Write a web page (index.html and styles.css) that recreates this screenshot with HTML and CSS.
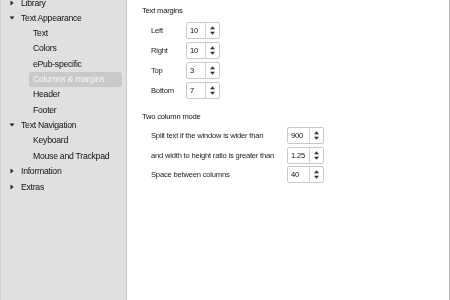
FILE: index.html
```html
<!DOCTYPE html>
<html>
<head>
<meta charset="utf-8">
<link rel="stylesheet" href="styles.css">
</head>
<body>
<div class="window">
  <nav class="sidebar">
    <ul class="tree">
      <li class="item top"><svg class="arr" width="8" height="8" viewBox="0 0 8 8"><path d="M2.5 1.5 L5.5 4 L2.5 6.5 Z"/></svg><span>Library</span></li>
      <li class="item top"><svg class="arr" width="8" height="8" viewBox="0 0 8 8"><path d="M1.5 2.5 L6.5 2.5 L4 5.5 Z"/></svg><span>Text Appearance</span></li>
      <li class="item child"><span>Text</span></li>
      <li class="item child"><span>Colors</span></li>
      <li class="item child"><span>ePub-specific</span></li>
      <li class="item child selected"><span>Columns &amp; margins</span></li>
      <li class="item child"><span>Header</span></li>
      <li class="item child"><span>Footer</span></li>
      <li class="item top"><svg class="arr" width="8" height="8" viewBox="0 0 8 8"><path d="M1.5 2.5 L6.5 2.5 L4 5.5 Z"/></svg><span>Text Navigation</span></li>
      <li class="item child"><span>Keyboard</span></li>
      <li class="item child"><span>Mouse and Trackpad</span></li>
      <li class="item top"><svg class="arr" width="8" height="8" viewBox="0 0 8 8"><path d="M2.5 1.5 L5.5 4 L2.5 6.5 Z"/></svg><span>Information</span></li>
      <li class="item top"><svg class="arr" width="8" height="8" viewBox="0 0 8 8"><path d="M2.5 1.5 L5.5 4 L2.5 6.5 Z"/></svg><span>Extras</span></li>
    </ul>
  </nav>
  <main class="content">
    <section class="group margins">
      <div class="title">Text margins</div>
      <div class="grid grid-margins">
        <span class="label">Left</span>
        <div class="spin"><span class="val">10</span><span class="arrows"><svg width="13" height="15" viewBox="0 0 13 15"><path d="M4 6.3 L6.5 3.3 L9 6.3 Z"/><path d="M4 8.7 L6.5 11.7 L9 8.7 Z"/></svg></span></div>
        <span class="label">Right</span>
        <div class="spin"><span class="val">10</span><span class="arrows"><svg width="13" height="15" viewBox="0 0 13 15"><path d="M4 6.3 L6.5 3.3 L9 6.3 Z"/><path d="M4 8.7 L6.5 11.7 L9 8.7 Z"/></svg></span></div>
        <span class="label">Top</span>
        <div class="spin"><span class="val">3</span><span class="arrows"><svg width="13" height="15" viewBox="0 0 13 15"><path d="M4 6.3 L6.5 3.3 L9 6.3 Z"/><path d="M4 8.7 L6.5 11.7 L9 8.7 Z"/></svg></span></div>
        <span class="label">Bottom</span>
        <div class="spin"><span class="val">7</span><span class="arrows"><svg width="13" height="15" viewBox="0 0 13 15"><path d="M4 6.3 L6.5 3.3 L9 6.3 Z"/><path d="M4 8.7 L6.5 11.7 L9 8.7 Z"/></svg></span></div>
      </div>
    </section>
    <section class="group columns">
      <div class="title">Two column mode</div>
      <div class="grid grid-columns">
        <span class="label">Split text if the window is wider than</span>
        <div class="spin"><span class="val">900</span><span class="arrows"><svg width="13" height="15" viewBox="0 0 13 15"><path d="M4 6.3 L6.5 3.3 L9 6.3 Z"/><path d="M4 8.7 L6.5 11.7 L9 8.7 Z"/></svg></span></div>
        <span class="label">and width to height ratio is greater than</span>
        <div class="spin"><span class="val">1.25</span><span class="arrows"><svg width="13" height="15" viewBox="0 0 13 15"><path d="M4 6.3 L6.5 3.3 L9 6.3 Z"/><path d="M4 8.7 L6.5 11.7 L9 8.7 Z"/></svg></span></div>
        <span class="label">Space between columns</span>
        <div class="spin"><span class="val">40</span><span class="arrows"><svg width="13" height="15" viewBox="0 0 13 15"><path d="M4 6.3 L6.5 3.3 L9 6.3 Z"/><path d="M4 8.7 L6.5 11.7 L9 8.7 Z"/></svg></span></div>
      </div>
    </section>
  </main>
</div>
</body>
</html>
```

FILE: styles.css
```css
html, body {
  margin: 0;
  padding: 0;
  width: 450px;
  height: 300px;
  overflow: hidden;
  background: #ffffff;
  font-family: "Liberation Sans", Arial, sans-serif;
}

.window {
  display: flex;
  width: 450px;
  height: 300px;
  will-change: transform;
}

.sidebar {
  width: 125px;
  flex: none;
  background: #e0e0e0;
  border-left: 1px solid #cfcfcf;
  border-right: 1px solid #c4c4c4;
  overflow: hidden;
}

.tree {
  list-style: none;
  margin: -5px 0 0 0;
  padding: 0;
}

.item {
  display: flex;
  align-items: center;
  height: 15.35px;
  font-size: 8.7px;
  letter-spacing: -0.27px;
  color: #111111;
  white-space: nowrap;
}

.item.top {
  padding-left: 7px;
}

.arr {
  fill: #222222;
  width: 8px;
  height: 8px;
  margin-right: 5px;
  flex: none;
}

.item.child {
  padding-left: 28px;
}

.item.child span {
  padding: 0 4px;
  height: 15px;
  line-height: 15px;
}

.item.selected span {
  background: #c9c9c9;
  color: #f6f6f6;
  border-radius: 3px;
  width: 85px;
}

.content {
  flex: 1;
  border-right: 1px solid #b4b4b4;
  padding-left: 15px;
  padding-top: 4px;
  color: #1a1a1a;
}

.title {
  font-size: 7.6px;
  letter-spacing: -0.2px;
  line-height: 14px;
  color: #111111;
}

.grid {
  display: grid;
  padding-left: 9px;
  align-items: center;
  font-size: 7.6px;
  letter-spacing: -0.2px;
}

.grid-margins {
  margin-top: 2px;
  grid-template-columns: 35px 34px;
  grid-auto-rows: 20px;
}

.grid-columns {
  margin-top: 2.5px;
  grid-template-columns: 136px 37px;
  grid-auto-rows: 19.5px;
}

.columns {
  margin-top: 9.7px;
}

.label {
  color: #1a1a1a;
  white-space: nowrap;
}

.spin {
  display: flex;
  height: 17px;
  box-sizing: border-box;
  border: 1px solid #c9c9c9;
  border-radius: 2px;
  background: #ffffff;
}

.val {
  flex: 1;
  padding-left: 3px;
  line-height: 15px;
  color: #111111;
}

.arrows {
  flex: none;
  width: 13px;
  border-left: 1px solid #d4d4d4;
  display: flex;
  align-items: center;
  justify-content: center;
}

.arrows svg {
  fill: #333333;
  display: block;
}
```
